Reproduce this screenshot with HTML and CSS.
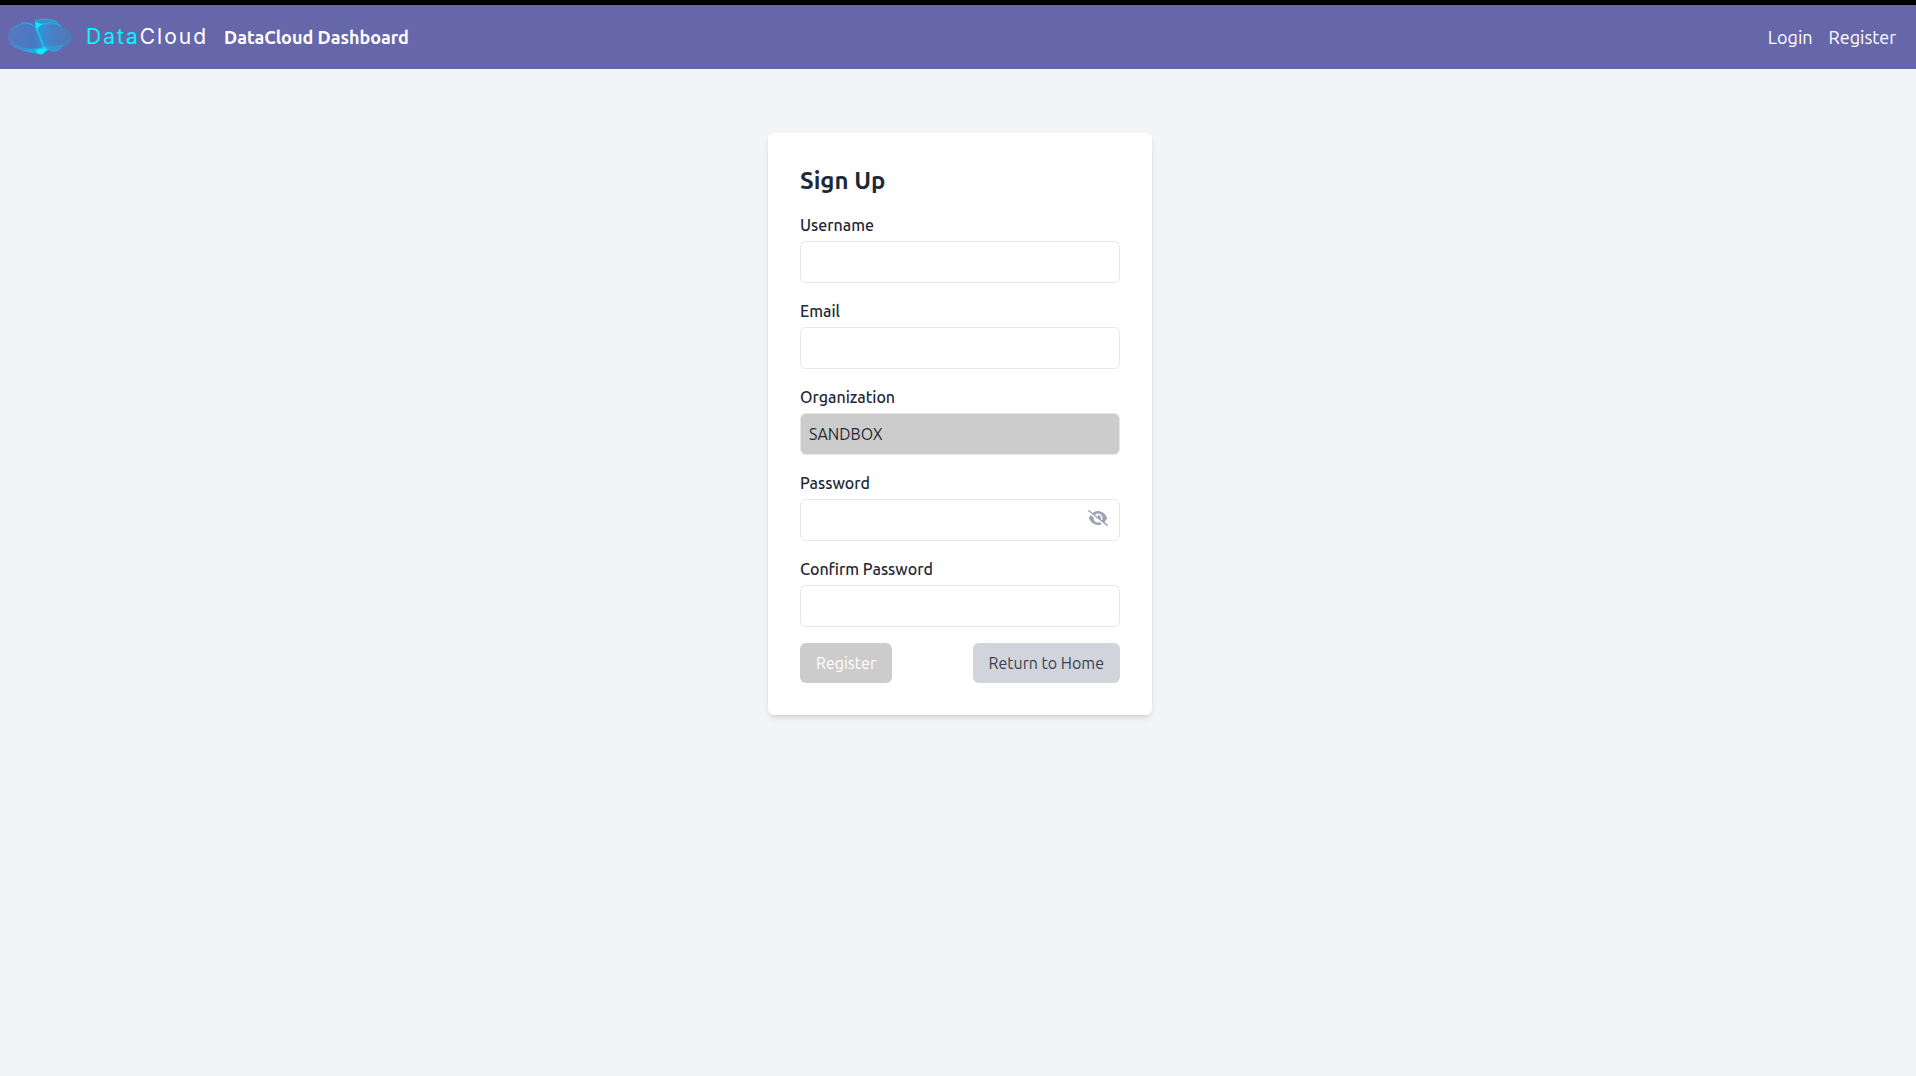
FILE: index.html
```
<!DOCTYPE html>
<html lang="en">
<head>
<meta charset="UTF-8" />
<meta name="viewport" content="width=device-width, initial-scale=1" />
<title>DataCloud Dashboard - Sign Up</title>
<link rel="stylesheet" href="styles.css">
</head>
<body>
<header class="navbar">
  <div class="brand">
    <a href="#" class="logo" aria-label="DataCloud">
      <svg class="logo-mark" viewBox="0 0 64 38" aria-hidden="true">
        <defs>
          <linearGradient id="leftLobe" x1="0" y1="0" x2="1" y2="0">
            <stop offset="0" stop-color="#5679bf" />
            <stop offset="0.7" stop-color="#4b78c2" />
            <stop offset="1" stop-color="#3a8ed2" />
          </linearGradient>
          <linearGradient id="rightLobe" x1="0" y1="0" x2="1" y2="0">
            <stop offset="0" stop-color="#2a9ade" />
            <stop offset="0.4" stop-color="#4582c6" />
            <stop offset="1" stop-color="#5574b9" />
          </linearGradient>
        </defs>
        <path fill="url(#leftLobe)" d="M0 19C0 13 3 9 8 7C14 5 22 4 26 6C28 8 30 12 32 16C34 22 36 28 37 33C34 36 28 35 20 33C12 31 0 28 0 19Z" />
        <path fill="url(#rightLobe)" d="M28 12C30 7 34 5 41 6C50 7 60 10 63 15C66 21 62 27 55 28C48 30 42 30 37 33C35 26 31 18 28 12Z" />
        <path fill="#1fa9e8" opacity="0.6" d="M27 4C30 0 40 1 47 3C51 4 53 7 54 9C47 6 38 5 29 11Z" />
        <path fill="#1fa9e8" opacity="0.6" d="M37 28C40 29 50 29 55 28C52 33 47 35 43 33C41 32 39 31 36 33Z" />
        <path fill="#16b8ee" opacity="0.7" d="M14 32C20 31 28 31 36 29L37 32L35 36C30 37 24 35 14 32Z" />
        <path fill="#00f0ff" d="M27 3C29 6 33 5 36 6C33 6 31 8 29 12C28 9 27 7 27 3Z" />
        <path fill="#00f0ff" d="M28 32C31 30 35 32 36 28C37 30 39 31 41 32C38 32 37 34 35 36C32 37 28 36 28 32Z" />
        <g fill="none" stroke="#16c8f4" stroke-width="1">
          <path d="M28 11C32 17 34 24 36 31" stroke-width="2" opacity="0.8" />
          <path d="M13 5C20 4 25 6 29 11" opacity="0.8" />
          <path d="M27 3C34 0 43 1 49 4" opacity="0.8" />
          <path d="M29 10C35 4 45 3 53 8" opacity="0.5" />
          <path d="M3 26C12 31 25 33 36 30" opacity="0.4" />
          <path d="M5 28C14 33 23 34 31 35" opacity="0.5" />
          <path d="M1 20C6 30 22 34 36 29" opacity="0.2" />
          <path d="M3 12C11 5 24 2 29 12" opacity="0.3" />
          <path d="M37 28C46 31 60 27 63 19" opacity="0.3" />
          <path d="M32 20C39 31 53 29 61 26" opacity="0.2" />
          <path d="M37 29C43 35 50 33 55 28" opacity="0.5" />
        </g>
      </svg>
      <span class="logo-text"><span class="logo-data">Data</span>Cloud</span>
    </a>
    <span class="brand-title">DataCloud Dashboard</span>
  </div>
  <nav class="nav-links">
    <a href="#">Login</a>
    <a href="#">Register</a>
  </nav>
</header>

<main>
  <form class="card">
    <h2>Sign Up</h2>
    <div class="field">
      <label for="username">Username</label>
      <input type="text" id="username" />
    </div>
    <div class="field">
      <label for="email">Email</label>
      <input type="email" id="email" />
    </div>
    <div class="field">
      <label for="organization">Organization</label>
      <input type="text" id="organization" value="SANDBOX" disabled />
    </div>
    <div class="field">
      <label for="password">Password</label>
      <div class="password-box">
        <input type="password" id="password" />
        <button type="button" class="toggle-password" aria-label="Show password">
          <svg viewBox="0 0 640 512" aria-hidden="true">
            <path fill="currentColor" d="M38.8 5.1C28.4-3.1 13.3-1.2 5.1 9.2S-1.2 34.7 9.2 42.9l592 464c10.4 8.2 25.5 6.3 33.7-4.1s6.3-25.5-4.1-33.7L525.6 386.7c39.6-40.6 66.4-86.1 79.9-118.4c3.3-7.9 3.3-16.7 0-24.6c-14.9-35.7-46.2-87.7-93-131.1C465.5 68.8 400.8 32 320 32c-68.2 0-125 26.3-169.3 60.8L38.8 5.1zM223.1 149.5C248.6 126.2 282.7 112 320 112c79.5 0 144 64.5 144 144c0 24.9-6.3 48.3-17.4 68.7L408 294.5c8.4-19.3 10.6-41.4 4.8-63.3c-11.1-41.5-47.8-69.4-88.6-71.1c-5.8-.2-9.2 6.1-7.4 11.7c2.1 6.4 3.3 13.2 3.3 20.3c0 10.2-2.4 19.8-6.6 28.3l-90.3-70.8zM373 389.9c-16.4 6.5-34.3 10.1-53 10.1c-79.5 0-144-64.5-144-144c0-6.9 .5-13.6 1.4-20.2L83.1 161.5C60.3 191.2 44 220.8 34.5 243.7c-3.3 7.9-3.3 16.7 0 24.6c14.9 35.7 46.2 87.7 93 131.1C174.5 443.2 239.2 480 320 480c47.8 0 89.9-12.9 126.2-32.5L373 389.9z" />
          </svg>
        </button>
      </div>
    </div>
    <div class="field">
      <label for="confirmPassword">Confirm Password</label>
      <input type="password" id="confirmPassword" />
    </div>
    <div class="actions">
      <button type="submit" class="btn btn-register" disabled>Register</button>
      <button type="button" class="btn btn-home">Return to Home</button>
    </div>
  </form>
</main>
</body>
</html>
```
FILE: styles.css
```
* {
  box-sizing: border-box;
}
body {
  margin: 0;
  min-height: 100vh;
  border-top: 5px solid #000;
  background: #f3f4f6;
  color: #1f2937;
  font-family: Ubuntu, "Noto Sans", sans-serif;
  font-size: 16px;
  line-height: 24px;
}
.navbar {
  display: flex;
  align-items: center;
  justify-content: space-between;
  height: 64px;
  padding: 0 20px 0 8px;
  background: #6667ab;
  color: #fff;
  font-size: 18px;
  line-height: 28px;
}
.navbar a {
  color: inherit;
  text-decoration: none;
}
.brand, .logo {
  display: flex;
  align-items: center;
}
.brand {
  gap: 16px;
}
.logo {
  gap: 14px;
}
.logo-mark {
  width: 64px;
  height: 38px;
}
.logo-text {
  font-family: Inter, sans-serif;
  font-size: 21px;
  letter-spacing: 2px;
}
.logo-data {
  color: #00f6ff;
}
.brand-title {
  font-weight: 700;
}
.nav-links {
  display: flex;
  gap: 16px;
}
main {
  display: flex;
  justify-content: center;
  padding: 64px 0 64px 4px;
}
.card {
  width: 384px;
  padding: 32px;
  background: #fff;
  border-radius: 6px;
  box-shadow: 0 4px 6px -1px rgba(0,0,0,0.1), 0 2px 4px -2px rgba(0,0,0,0.1);
}
.card h2 {
  margin: 0 0 16px;
  font-size: 24px;
  line-height: 32px;
  font-weight: 700;
}
.field {
  margin-bottom: 16px;
}
.field label {
  display: block;
  margin-bottom: 4px;
  font-weight: 500;
}
.field input {
  display: block;
  width: 100%;
  height: 42px;
  padding: 8px;
  border: 1px solid #e5e7eb;
  border-radius: 6px;
  background: #fff;
  color: #1f2937;
  font: inherit;
}
.field input:disabled {
  background: #ccc;
}
.password-box {
  position: relative;
}
.toggle-password {
  position: absolute;
  top: 11px;
  right: 12px;
  display: flex;
  padding: 0;
  border: none;
  background: none;
  color: #9ca3af;
  cursor: pointer;
}
.toggle-password svg {
  width: 20px;
  height: 16px;
}
.actions {
  display: flex;
  justify-content: space-between;
}
.btn {
  padding: 8px 16px;
  border: none;
  border-radius: 6px;
  font: inherit;
  cursor: pointer;
}
.btn-register {
  background: #ccc;
  color: #fff;
}
.btn-register:disabled {
  cursor: not-allowed;
}
.btn-home {
  background: #d1d5db;
  color: #374151;
}
```
